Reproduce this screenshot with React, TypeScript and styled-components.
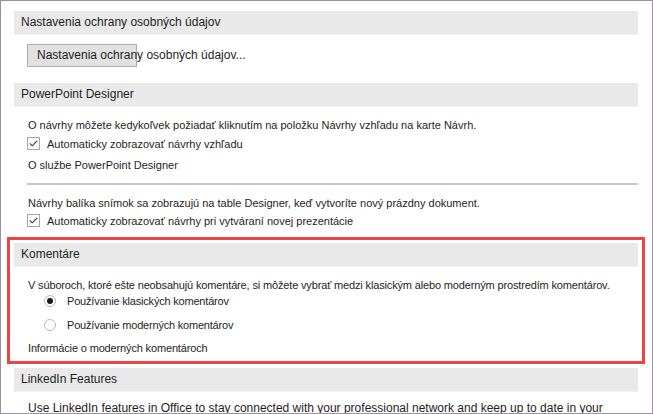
import React from "react";
import styled, { createGlobalStyle } from "styled-components";

const GlobalStyle = createGlobalStyle`
  body {
    margin: 0;
    background: #ffffff;
    font-family: "Liberation Sans", Arial, sans-serif;
  }
`;

const Window = styled("div")({
  width: "653px",
  height: "414px",
  boxSizing: "border-box",
  border: "1px solid #9d8fa2",
  padding: "10px 14px 0 13px",
  overflow: "hidden",
  background: "#ffffff",
  color: "#1e1e1e",
  fontSize: "12px",
});

const SectionHeader = styled("div")({
  height: "23px",
  lineHeight: "23px",
  background: "#e9e9e9",
  borderBottom: "1px solid #f2f2f2",
  paddingLeft: "7px",
  whiteSpace: "nowrap",
});

const SectionBody = styled("div")<{ $top?: number; $bottom?: number }>(
  ({ $top = 8, $bottom = 0 }) => ({
    padding: `${$top}px 0 ${$bottom}px 13px`,
    fontSize: "11px",
  })
);

const Highlight = styled("div")({
  margin: "8px -7px 4px -7px",
  border: "3px solid #ef4444",
  padding: "3px 4px 4px 4px",
});

const Line = styled("div")<{ $condensed?: boolean; $gap?: number; $large?: boolean }>(
  ({ $condensed, $gap = 0, $large }) => ({
    lineHeight: "18px",
    marginTop: `${$gap}px`,
    whiteSpace: "nowrap",
    letterSpacing: $condensed ? "-0.15px" : "normal",
    fontSize: $large ? "12px" : "11px",
    paddingLeft: "1px",
  })
);

const FakeButton = styled("div")({
  width: "110px",
  height: "23px",
  boxSizing: "border-box",
  background: "#e1e1e1",
  border: "1px solid #adadad",
  padding: "0 0 0 9px",
  lineHeight: "21px",
  fontSize: "12px",
  whiteSpace: "nowrap",
  overflow: "visible",
});

const CheckRow = styled("label")<{ $gap?: number }>(({ $gap = 0 }) => ({
  display: "flex",
  alignItems: "center",
  gap: "7px",
  height: "17px",
  marginTop: `${$gap}px`,
  whiteSpace: "nowrap",
}));

const Box = styled("span")({
  width: "13px",
  height: "13px",
  boxSizing: "border-box",
  border: "1px solid #a6a6a6",
  background: "#ffffff",
  display: "flex",
  alignItems: "center",
  justifyContent: "center",
});

const RadioRow = styled("label")<{ $gap?: number }>(({ $gap = 0 }) => ({
  display: "flex",
  alignItems: "center",
  gap: "11px",
  height: "16px",
  marginTop: `${$gap}px`,
  paddingLeft: "17px",
  whiteSpace: "nowrap",
  letterSpacing: "-0.2px",
}));

const Radio = styled("span")<{ $on?: boolean }>(({ $on }) => ({
  width: "12px",
  height: "12px",
  boxSizing: "border-box",
  borderRadius: "50%",
  border: "1px solid #b9b9b9",
  background: "#ffffff",
  display: "flex",
  alignItems: "center",
  justifyContent: "center",
  "&::after": {
    content: '""',
    width: "6px",
    height: "6px",
    borderRadius: "50%",
    background: $on ? "#1a1a1a" : "transparent",
  },
}));

const Divider = styled("div")({
  height: "2px",
  background: "#cacaca",
  margin: "9px 0 0 0",
});

const Check = () => (
  <Box>
    <svg width="9" height="7" viewBox="0 0 9 7">
      <polyline
        points="0.8,3.4 3.2,5.8 8.2,0.8"
        fill="none"
        stroke="#333"
        strokeWidth="1.1"
      />
    </svg>
  </Box>
);

export default function App() {
  return (
    <>
      <GlobalStyle />
      <Window>
        <SectionHeader>Nastavenia ochrany osobných údajov</SectionHeader>
        <SectionBody $top={9} $bottom={16}>
          <FakeButton>Nastavenia ochrany osobných údajov...</FakeButton>
        </SectionBody>

        <SectionHeader>PowerPoint Designer</SectionHeader>
        <SectionBody $top={9}>
          <Line>
            O návrhy môžete kedykoľvek požiadať kliknutím na položku Návrhy
            vzhľadu na karte Návrh.
          </Line>
          <CheckRow $gap={1}>
            <Check />
            Automaticky zobrazovať návrhy vzhľadu
          </CheckRow>
          <Line $gap={4}>O službe PowerPoint Designer</Line>
          <Divider />
          <Line $gap={9}>
            Návrhy balíka snímok sa zobrazujú na table Designer, keď vytvoríte
            nový prázdny dokument.
          </Line>
          <CheckRow>
            <Check />
            Automaticky zobrazovať návrhy pri vytváraní novej prezentácie
          </CheckRow>
        </SectionBody>

        <Highlight>
          <SectionHeader>Komentáre</SectionHeader>
          <SectionBody $top={9}>
            <Line $condensed>
              V súboroch, ktoré ešte neobsahujú komentáre, si môžete vybrať
              medzi klasickým alebo moderným prostredím komentárov.
            </Line>
            <RadioRow $gap={-1}>
              <Radio $on />
              Používanie klasických komentárov
            </RadioRow>
            <RadioRow $gap={8}>
              <Radio />
              Používanie moderných komentárov
            </RadioRow>
            <Line $condensed $gap={6}>
              Informácie o moderných komentároch
            </Line>
          </SectionBody>
        </Highlight>

        <SectionHeader>LinkedIn Features</SectionHeader>
        <SectionBody $top={7}>
          <Line $large>
            Use LinkedIn features in Office to stay connected with your
            professional network and keep up to date in your
          </Line>
        </SectionBody>
      </Window>
    </>
  );
}
